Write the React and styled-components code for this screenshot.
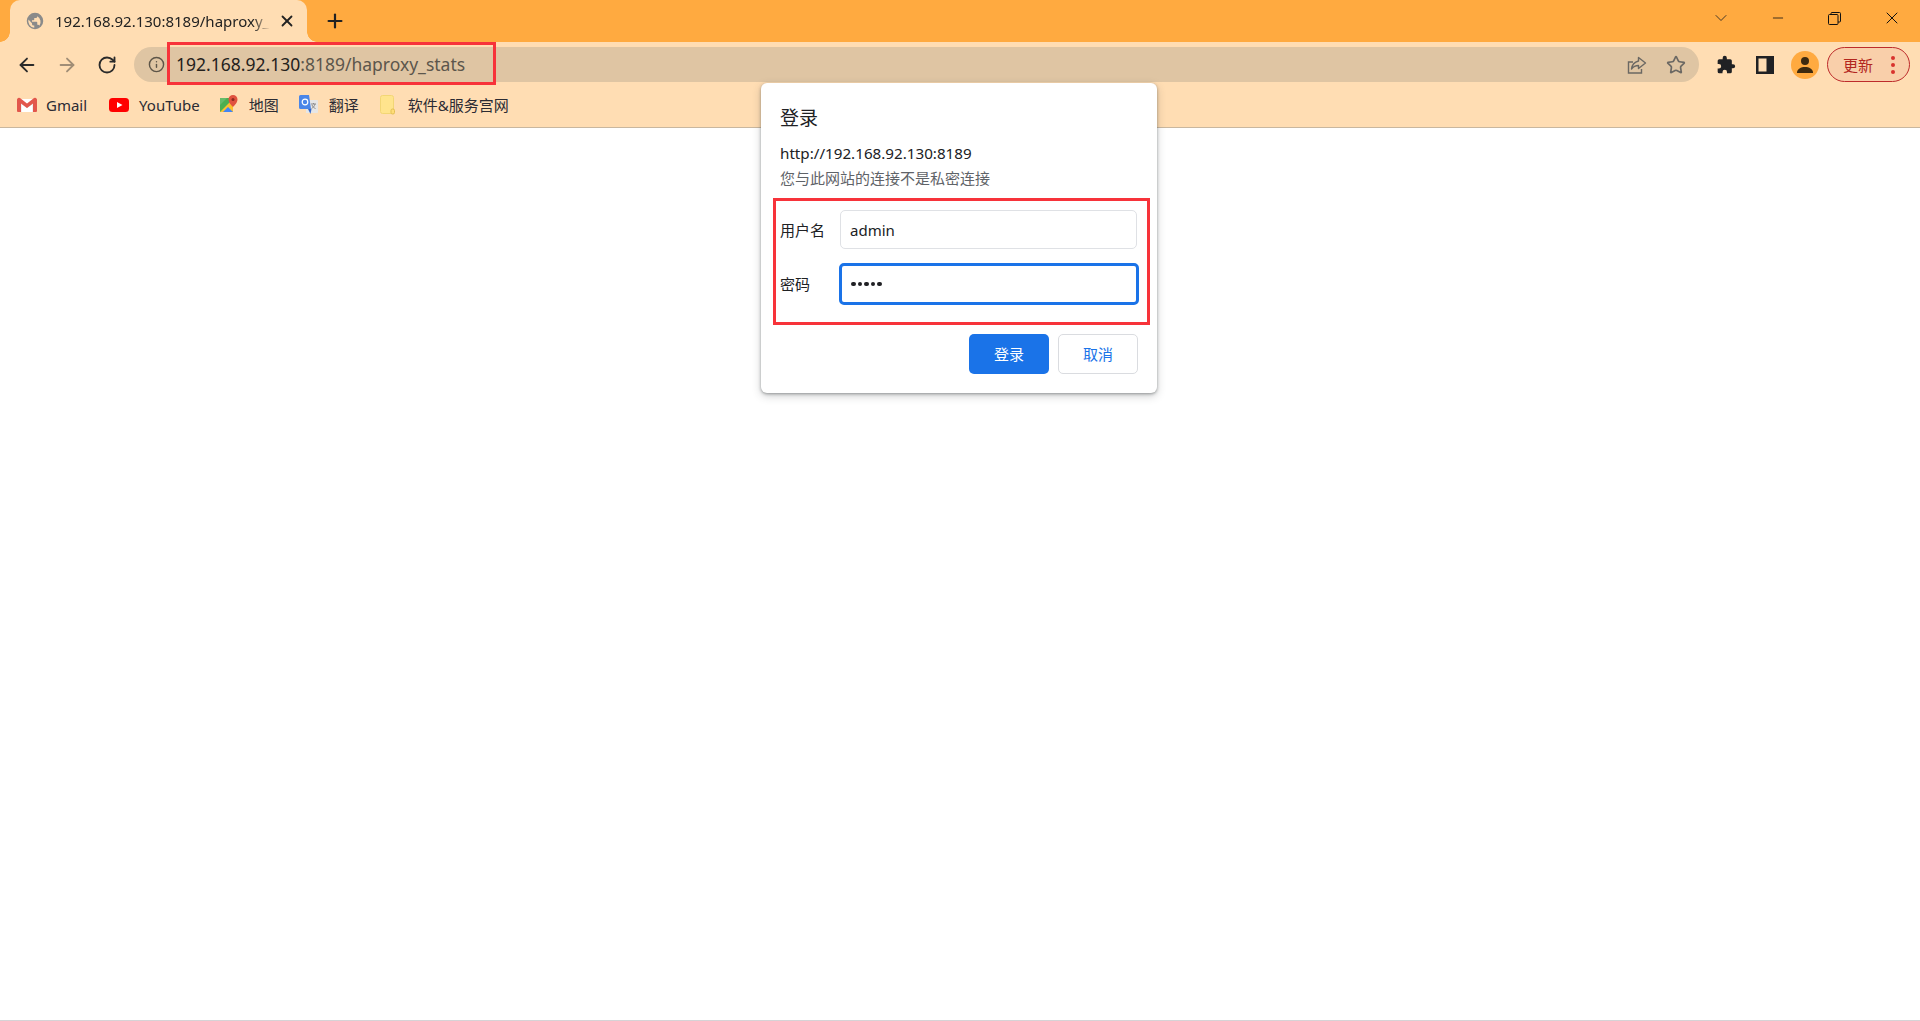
import React from 'react'
import styled, { createGlobalStyle } from 'styled-components'
import { ArrowLeft, ArrowRight, RotateCw, Info, Plus, X, Minus, ChevronDown, Star } from 'lucide-react'

const GlobalStyle = createGlobalStyle`
  html, body { margin: 0; padding: 0; background: #fff; }
  body { font-family: "Noto Sans", "Noto Sans CJK SC", sans-serif; overflow: hidden; }
`

const CJK = `"Noto Sans", "Noto Sans CJK SC", sans-serif`

const Page = styled.div`
  position: relative;
  width: 1920px;
  height: 1021px;
  display: flex;
  flex-direction: column;
  background: #fff;
  border-bottom: 1px solid #d6d3d6;
  box-sizing: border-box;
`
const TabStrip = styled.div`
  height: 42px;
  background: #ffaa40;
  display: flex;
  align-items: flex-end;
  padding-left: 10px;
  flex-shrink: 0;
`
const Tab = styled.div`
  position: relative;
  width: 297px;
  height: 42px;
  background: #ffddb3;
  border-radius: 10px 10px 0 0;
  display: flex;
  align-items: center;
  padding: 0 11px 0 16px;
  box-sizing: border-box;
  &::before, &::after {
    content: '';
    position: absolute;
    bottom: 0;
    width: 10px;
    height: 10px;
    background: radial-gradient(circle at var(--cx) 0, #ffaa40 9.5px, #ffddb3 10px);
  }
  &::before { left: -10px; --cx: 0; }
  &::after { right: -10px; --cx: 10px; }
`
const TabTitle = styled.span`
  flex: 1;
  margin: 0 8px 0 11px;
  font: 15px ${CJK};
  color: #222;
  white-space: nowrap;
  overflow: hidden;
  -webkit-mask-image: linear-gradient(to right, #000 92%, transparent);
  mask-image: linear-gradient(to right, #000 92%, transparent);
`
const NewTab = styled.div`
  margin: 0 0 0 17px;
  height: 42px;
  display: flex;
  align-items: center;
  color: #222;
`
const WindowControls = styled.div`
  margin-left: auto;
  height: 36px;
  align-self: flex-start;
  display: flex;
  align-items: center;
  color: #222;
`
const WinButton = styled.div`
  width: 57px;
  display: flex;
  justify-content: center;
`
const Toolbar = styled.div`
  height: 45px;
  padding-bottom: 1px;
  background: #ffddb3;
  display: flex;
  align-items: center;
  flex-shrink: 0;
  padding-left: 15px;
`
const NavButton = styled.div`
  width: 24px;
  height: 24px;
  margin-right: ${p => p.$gap || 16}px;
  display: flex;
  align-items: center;
  justify-content: center;
  color: ${p => (p.$dim ? '#a08d76' : '#2a2a2a')};
`
const Omnibox = styled.div`
  width: 1565px;
  height: 35px;
  margin-left: 1px;
  box-sizing: border-box;
  background: #dfc5a3;
  border-radius: 18px;
  display: flex;
  align-items: center;
  padding: 0 13px 0 14px;
  color: #5d5548;
`
const UrlText = styled.span`
  margin-left: 11px;
  padding-bottom: 2px;
  font: 17.500px ${CJK};
  color: #5c564c;
  b { font-weight: 400; color: #24211c; }
`
const OmniIcons = styled.div`
  margin-left: auto;
  display: flex;
  align-items: center;
  gap: 19px;
  color: #6b6863;
`
const ToolIcons = styled.div`
  display: flex;
  align-items: center;
  margin-left: 17px;
`
const ToolSlot = styled.div`
  display: flex;
  margin-right: ${p => p.$gap}px;
`
const Avatar = styled.div`
  width: 28px;
  height: 28px;
  border-radius: 50%;
  background: #ffaa40;
  display: flex;
  align-items: center;
  justify-content: center;
`
const UpdateChip = styled.div`
  width: 83px;
  height: 35px;
  margin-left: 8px;
  box-sizing: border-box;
  border: 1.500px solid #bd2b2b;
  border-radius: 18px;
  background: #f9cfaa;
  display: flex;
  align-items: center;
  padding-left: 15px;
  font: 15px ${CJK};
  color: #b3261e;
  justify-content: space-between;
`
const Dots = styled.div`
  display: flex;
  flex-direction: column;
  gap: 3px;
  margin-right: 14px;
  i { width: 4px; height: 4px; border-radius: 50%; background: #d8322e; display: block; }
`
const BookmarkBar = styled.div`
  height: 33px;
  padding: 0 0 6px 17px;
  background: #ffddb3;
  border-bottom: 1px solid #c9b79f;
  display: flex;
  align-items: center;
  flex-shrink: 0;
`
const Bookmark = styled.div`
  display: flex;
  align-items: center;
  margin-right: ${p => p.$gap}px;
  font: 15px ${CJK};
  color: #2b2b33;
  svg { margin-right: ${p => p.$iconGap || 10}px; flex-shrink: 0; }
`
const Annotation = styled.div`
  position: absolute;
  left: 167px;
  top: 42px;
  width: 329px;
  height: 43px;
  box-sizing: border-box;
  border: 3px solid #f7333a;
`
const Dialog = styled.div`
  position: absolute;
  left: 761px;
  top: 83px;
  width: 396px;
  height: 310px;
  box-sizing: border-box;
  background: #fff;
  border-radius: 6px;
  box-shadow: 0 1px 3px rgba(60, 64, 67, .45), 0 3px 8px rgba(60, 64, 67, .25);
  padding: 20px 19px 0;
`
const DialogTitle = styled.div`
  font: 19px/30px ${CJK};
  color: #202124;
`
const Origin = styled.div`
  margin-top: 9px;
  font: 15.200px/22px ${CJK};
  color: #202124;
`
const Note = styled.div`
  margin-top: 3px;
  font: 15px/22px ${CJK};
  color: #5f6368;
`
const FieldBox = styled.div`
  margin: 9px -12px 0 -7px;
  height: 127px;
  box-sizing: border-box;
  border: 3px solid #f7333a;
  padding: 7px 0 0 4px;
`
const Row = styled.div`
  display: flex;
  align-items: center;
  height: 42px;
  margin-bottom: ${p => p.$mb || 0}px;
`
const Label = styled.div`
  width: 60px;
  flex-shrink: 0;
  padding-bottom: ${p => (p.$lift ? 2 : 0)}px;
  font: 15px ${CJK};
  color: #202124;
`
const Field = styled.div`
  width: ${p => (p.$focus ? 300 : 297)}px;
  height: ${p => (p.$focus ? 42 : 39)}px;
  margin-left: ${p => (p.$focus ? -1 : 0)}px;
  padding-top: ${p => (p.$focus ? 0 : 1)}px;
  box-sizing: border-box;
  border: ${p => (p.$focus ? '3px solid #1a73e8' : '1px solid #dfe1e5')};
  border-radius: 5px;
  display: flex;
  align-items: center;
  padding-left: 9px;
  font: 15px ${CJK};
  color: #202124;
`
const Masked = styled.div`
  display: flex;
  gap: 2px;
  i { width: 4.500px; height: 4.500px; border-radius: 50%; background: #202124; display: block; }
`
const Buttons = styled.div`
  display: flex;
  justify-content: flex-end;
  gap: 9px;
  margin: 9px 0 0 0;
`
const Button = styled.div`
  width: 80px;
  height: 40px;
  box-sizing: border-box;
  padding-bottom: 2px;
  border-radius: 5px;
  display: flex;
  align-items: center;
  justify-content: center;
  font: 15px ${CJK};
  background: ${p => (p.$primary ? '#1a73e8' : '#fff')};
  color: ${p => (p.$primary ? '#fff' : '#1a73e8')};
  border: ${p => (p.$primary ? 'none' : '1px solid #dadce0')};
`

const Globe = () => (
  <svg width="18" height="18" viewBox="0 0 24 24" fill="#8a8a8a">
    <path d="M12 1a11 11 0 1 0 0 22 11 11 0 0 0 0-22zm-1 19.900A9 9 0 0 1 3.200 10L8 15v1a2 2 0 0 0 2 2h1zm6.900-2.500A2 2 0 0 0 16 17h-1v-3a1 1 0 0 0-1-1H8v-2h2a1 1 0 0 0 1-1V8h2a2 2 0 0 0 2-2v-.4a9 9 0 0 1 2.900 12.800z" />
  </svg>
)
const WinRestore = () => (
  <svg width="13" height="13" viewBox="0 0 13 13" fill="none" stroke="#111" strokeWidth="1">
    <rect x="0.500" y="2.500" width="9.500" height="10" rx="1" />
    <path d="M3 2.500V1.500a1 1 0 0 1 1-1h7.500a1 1 0 0 1 1 1V9a1 1 0 0 1-1 1H10" />
  </svg>
)
const Share = () => (
  <svg width="20" height="18" viewBox="0 0 20 18" fill="none" stroke="currentColor" strokeWidth="1.400">
    <path d="M6 6H1.500v11h13v-4" />
    <path d="M11.500 1.500 18.500 7l-7 5.500V9.500c-3 0-5 .8-7 3.500.5-4 3-7 7-8z" strokeLinejoin="round" />
  </svg>
)
const Puzzle = () => (
  <svg width="20" height="20" viewBox="0 0 24 24" fill="#202124">
    <path d="M20.500 11H19V7a2 2 0 0 0-2-2h-4V3.500a2.500 2.500 0 0 0-5 0V5H4a2 2 0 0 0-2 2v3.800h1.500a2.700 2.700 0 0 1 0 5.400H2V20a2 2 0 0 0 2 2h3.800v-1.500a2.700 2.700 0 0 1 5.400 0V22H17a2 2 0 0 0 2-2v-4h1.500a2.500 2.500 0 0 0 0-5z" />
  </svg>
)
const SidePanel = () => (
  <svg width="18" height="18" viewBox="0 0 18 18">
    <path d="M0 0h18v18H0z" fill="#202124" />
    <path d="M2.500 2.500h8v13h-8z" fill="#ffddb3" />
  </svg>
)
const Person = () => (
  <svg width="18" height="18" viewBox="0 0 18 18" fill="#3d2a10">
    <circle cx="9" cy="5" r="4" />
    <path d="M1 16.500c0-3.500 4-5.500 8-5.500s8 2 8 5.500V17H1z" />
  </svg>
)
const Gmail = () => (
  <svg width="20" height="16" viewBox="0 0 20 16">
    <path d="M1 2h18v13H1z" fill="#fff" />
    <path d="M1 15V2l9 7 9-7v13h-3.500V7L10 11.300 4.500 7v8z" fill="#dfe0e0" />
    <path d="M0 2.500A2 2 0 0 1 3 1l7 5.500L17 1a2 2 0 0 1 3 1.500V14a1 1 0 0 1-1 1h-3V6.500l-6 4.500-6-4.500V15H1a1 1 0 0 1-1-1z" fill="#e2574c" />
  </svg>
)
const YouTube = () => (
  <svg width="20" height="14" viewBox="0 0 20 14">
    <rect width="20" height="14" rx="3.500" fill="#f00" />
    <path d="M8 4l5.500 3L8 10z" fill="#fff" />
  </svg>
)
const Maps = () => (
  <svg width="18" height="19" viewBox="0 0 18 19">
    <path d="M0 3h13v14H0z" fill="#4caf50" />
    <path d="M0 3h7L0 10z" fill="#66bb6a" />
    <path d="M0 17l13-13v13z" fill="#fbc02d" />
    <path d="M3 17l5-5 5 5z" fill="#4285f4" />
    <path d="M13 0a4.500 4.500 0 0 0-4.500 4.500C8.500 8 13 12 13 12s4.500-4 4.500-7.500A4.500 4.500 0 0 0 13 0z" fill="#e0523f" />
    <circle cx="13" cy="4.500" r="1.500" fill="#8e2a20" />
  </svg>
)
const Translate = () => (
  <svg width="19" height="20" viewBox="0 0 19 20">
    <path d="M7 5h11a1 1 0 0 1 1 1v11a1 1 0 0 1-1 1H7z" fill="#e6e6e6" />
    <path d="M1.500 0H10l2 14H1.500A1.500 1.500 0 0 1 0 12.500v-11A1.500 1.500 0 0 1 1.500 0z" fill="#4a86e8" />
    <path d="M9 14l2.500 5 1-5z" fill="#3367c9" />
    <circle cx="6" cy="7" r="2.800" fill="none" stroke="#fff" strokeWidth="1.200" />
    <path d="M12 9h5M14.500 8v1M16 9c-.5 2-2 4-3.500 4.500M13 10c.5 1.500 2 3 3.500 3.500" stroke="#8a8a8a" fill="none" />
  </svg>
)
const Folder = () => (
  <svg width="15" height="20" viewBox="0 0 15 20">
    <rect x="0.500" y="0.500" width="13" height="18" rx="2" fill="#ffe48d" stroke="#f2d675" />
    <rect x="11" y="14" width="3.500" height="5" rx="1.500" fill="#ffdd77" stroke="#e2bf55" />
  </svg>
)

export default function App() {
  return (
    <Page>
      <GlobalStyle />
      <TabStrip>
        <Tab>
          <Globe />
          <TabTitle>192.168.92.130:8189/haproxy_stats</TabTitle>
          <X size={18} strokeWidth={2.400} color="#222" />
        </Tab>
        <NewTab><Plus size={22} strokeWidth={2.400} /></NewTab>
        <WindowControls>
          <WinButton><ChevronDown size={20} strokeWidth={1} /></WinButton>
          <WinButton><Minus size={16} strokeWidth={1.200} color="#111" /></WinButton>
          <WinButton><WinRestore /></WinButton>
          <WinButton><X size={20} strokeWidth={1.200} color="#111" /></WinButton>
        </WindowControls>
      </TabStrip>
      <Toolbar>
        <NavButton><ArrowLeft size={22} strokeWidth={2} /></NavButton>
        <NavButton $dim><ArrowRight size={22} strokeWidth={2} /></NavButton>
        <NavButton $gap={14}><RotateCw size={20} strokeWidth={2.200} /></NavButton>
        <Omnibox>
          <Info size={17} strokeWidth={2} />
          <UrlText><b>192.168.92.130</b>:8189/haproxy_stats</UrlText>
          <OmniIcons>
            <Share />
            <Star size={20} strokeWidth={2} />
          </OmniIcons>
        </Omnibox>
        <ToolIcons>
          <ToolSlot $gap={20}><Puzzle /></ToolSlot>
          <ToolSlot $gap={17}><SidePanel /></ToolSlot>
          <Avatar><Person /></Avatar>
        </ToolIcons>
        <UpdateChip>
          更新
          <Dots><i /><i /><i /></Dots>
        </UpdateChip>
      </Toolbar>
      <BookmarkBar>
        <Bookmark $gap={22} $iconGap={9}><Gmail />Gmail</Bookmark>
        <Bookmark $gap={20} $iconGap={10}><YouTube />YouTube</Bookmark>
        <Bookmark $gap={20} $iconGap={11}><Maps />地图</Bookmark>
        <Bookmark $gap={21} $iconGap={11}><Translate />翻译</Bookmark>
        <Bookmark $gap={0} $iconGap={13}><Folder />软件&amp;服务宫网</Bookmark>
      </BookmarkBar>
      <Annotation />
      <Dialog>
        <DialogTitle>登录</DialogTitle>
        <Origin>http://192.168.92.130:8189</Origin>
        <Note>您与此网站的连接不是私密连接</Note>
        <FieldBox>
          <Row $mb={13}>
            <Label>用户名</Label>
            <Field>admin</Field>
          </Row>
          <Row>
            <Label $lift>密码</Label>
            <Field $focus><Masked><i /><i /><i /><i /><i /></Masked></Field>
          </Row>
        </FieldBox>
        <Buttons>
          <Button $primary>登录</Button>
          <Button>取消</Button>
        </Buttons>
      </Dialog>
    </Page>
  )
}
